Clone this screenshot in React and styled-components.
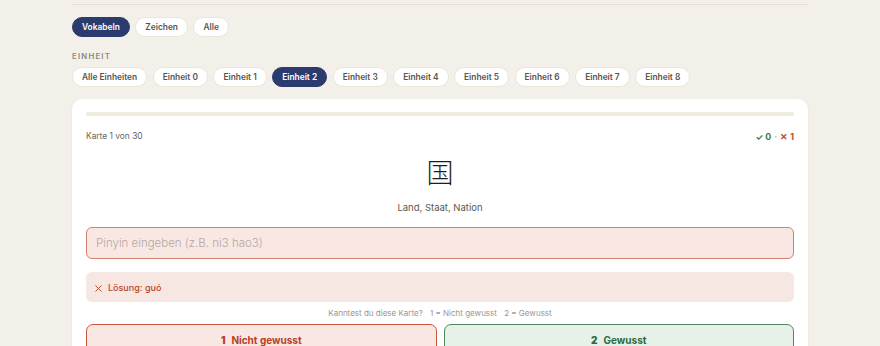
import React from "react";
import styled, { createGlobalStyle } from "styled-components";

const GlobalStyle = createGlobalStyle`
  html, body {
    margin: 0;
    padding: 0;
    background: #f3f0e9;
    font-family: "Inter", "Liberation Sans", sans-serif;
    color: #2a2824;
  }
`;

const Page = styled.div`
  width: 736px;
  margin: 0 auto;
  padding-top: 4px;
`;

const Divider = styled.div`
  height: 1px;
  background: #e4dfd1;
`;

const PillRow = styled.div`
  display: flex;
  gap: ${(p) => p.$gap || 5.5}px;
  margin-top: ${(p) => p.$top || 0}px;
`;

const Pill = styled.button`
  height: 20px;
  padding: 0 9px;
  border-radius: 10px;
  border: 1px solid ${(p) => (p.$active ? "#2b3b6e" : "#ebe6db")};
  background: ${(p) => (p.$active ? "#2b3b6e" : "#ffffff")};
  color: ${(p) => (p.$active ? "#ffffff" : "#5a554d")};
  font-family: inherit;
  font-size: 8.4px;
  font-weight: 600;
  line-height: 18px;
  cursor: pointer;
`;

const Label = styled.div`
  margin-top: 14px;
  height: 10px;
  line-height: 10px;
  font-size: 7.8px;
  font-weight: 600;
  letter-spacing: 1.2px;
  color: #8d877b;
  text-transform: uppercase;
`;

const Card = styled.div`
  margin-top: 12px;
  background: #ffffff;
  border-radius: 10px;
  box-shadow: 0 1px 3px rgba(60, 50, 30, 0.07);
  padding: 13px 14px 20px;
`;

const Progress = styled.div`
  height: 4px;
  border-radius: 2px;
  background: #efebdf;
`;

const MetaRow = styled.div`
  display: flex;
  justify-content: space-between;
  align-items: center;
  margin-top: 14px;
  height: 12px;
  font-size: 8.4px;
  color: #6a665f;
`;

const Score = styled.div`
  display: flex;
  gap: 3px;
  font-weight: 700;
  font-size: 8.8px;
`;

const Tone = styled.span`
  color: ${(p) => (p.$tone === "good" ? "#3d7b4f" : p.$tone === "bad" ? "#c4452c" : "#b7b2a8")};
`;

const Hanzi = styled.div`
  margin-top: 14px;
  height: 32px;
  line-height: 32px;
  text-align: center;
  font-family: "Noto Sans CJK SC", "Noto Sans CJK JP", sans-serif;
  font-size: 27px;
  font-weight: 300;
  color: #1f1d1a;
`;

const Meaning = styled.div`
  margin-top: 13px;
  height: 14px;
  line-height: 14px;
  text-align: center;
  font-size: 9.5px;
  color: #5c5850;
`;

const Input = styled.input`
  display: block;
  box-sizing: border-box;
  width: 100%;
  height: 32px;
  margin-top: 12px;
  padding: 0 9px;
  border: 1px solid #d3806c;
  border-radius: 6px;
  background: #f8e7e3;
  font-family: inherit;
  font-size: 11.5px;
  font-weight: 300;
  color: #3a3630;
  outline: none;

  &::placeholder {
    color: #b5a8a3;
  }
`;

const Feedback = styled.div`
  display: flex;
  align-items: center;
  gap: 6px;
  height: 30px;
  margin-top: 13px;
  padding: 0 9px;
  border-radius: 6px;
  background: #f7e7e3;
  color: #b9442c;
  font-size: 9px;
  font-weight: 500;
`;

const Hint = styled.div`
  margin-top: 5px;
  height: 12px;
  line-height: 12px;
  text-align: center;
  font-size: 8px;
  color: #9b968d;

  span {
    margin-left: 5px;
  }
`;

const Answers = styled.div`
  display: grid;
  grid-template-columns: 1fr 1fr;
  gap: 7px;
  margin-top: 5px;
`;

const Answer = styled.button`
  height: 32px;
  border-radius: 7px;
  border: 1px solid ${(p) => (p.$good ? "#4f8660" : "#c8573f")};
  background: ${(p) => (p.$good ? "#e6f1e8" : "#f8e7e3")};
  color: ${(p) => (p.$good ? "#2f6a40" : "#b63f28")};
  font-family: inherit;
  font-size: 10px;
  font-weight: 700;
  padding: 0 0 1px;
  cursor: pointer;

  b {
    margin-right: 6px;
  }
`;

const Cross = ({ size = 7 }) => (
  <svg width={size} height={size} viewBox="0 0 10 10" style={{ marginTop: 3 }}>
    <path d="M1 1 L9 9 M9 1 L1 9" stroke="currentColor" strokeWidth="1.3" strokeLinecap="round" />
  </svg>
);

const units = ["Alle Einheiten", ...Array.from({ length: 9 }, (_, i) => `Einheit ${i}`)];

export default function App() {
  return (
    <>
      <GlobalStyle />
      <Page>
        <Divider />
        <PillRow $top={12}>
          <Pill $active>Vokabeln</Pill>
          <Pill>Zeichen</Pill>
          <Pill>Alle</Pill>
        </PillRow>
        <Label>Einheit</Label>
        <PillRow $top={6}>
          {units.map((u) => (
            <Pill key={u} $active={u === "Einheit 2"}>
              {u}
            </Pill>
          ))}
        </PillRow>
        <Card>
          <Progress />
          <MetaRow>
            <span>Karte 1 von 30</span>
            <Score>
              <Tone $tone="good">✓ 0</Tone>
              <Tone>·</Tone>
              <Tone $tone="bad">✕ 1</Tone>
            </Score>
          </MetaRow>
          <Hanzi>国</Hanzi>
          <Meaning>Land, Staat, Nation</Meaning>
          <Input placeholder="Pinyin eingeben (z.B. ni3 hao3)" />
          <Feedback>
            <Cross />
            <span>Lösung: guó</span>
          </Feedback>
          <Hint>
            Kanntest du diese Karte? <span>1 = Nicht gewusst</span> <span>2 = Gewusst</span>
          </Hint>
          <Answers>
            <Answer>
              <b>1</b>Nicht gewusst
            </Answer>
            <Answer $good>
              <b>2</b>Gewusst
            </Answer>
          </Answers>
        </Card>
      </Page>
    </>
  );
}
